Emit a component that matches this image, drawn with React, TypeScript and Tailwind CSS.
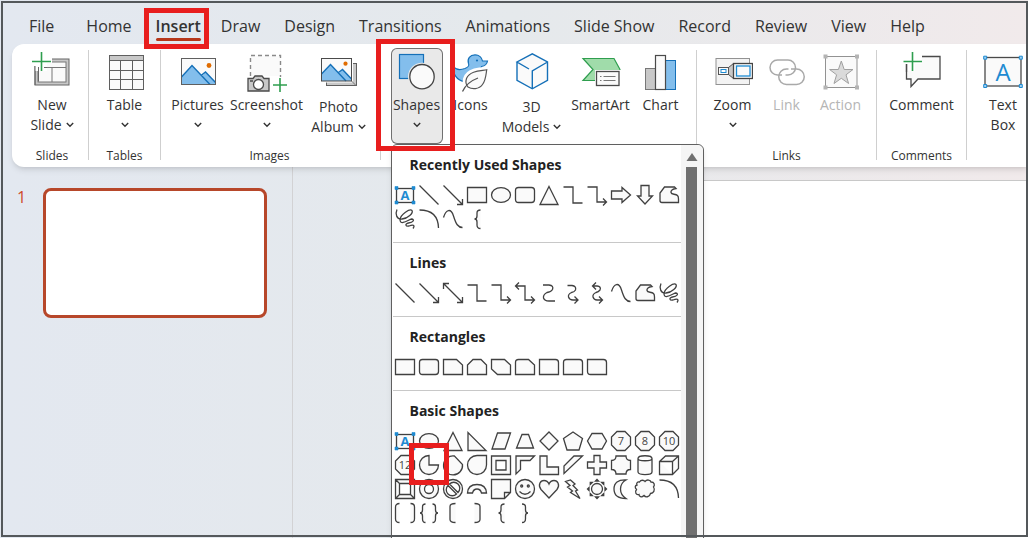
import type { ReactNode } from 'react';
import clsx from 'clsx';

const tabs = [
  'File',
  'Home',
  'Insert',
  'Draw',
  'Design',
  'Transitions',
  'Animations',
  'Slide Show',
  'Record',
  'Review',
  'View',
  'Help',
];

// ---------- Ribbon icons (40 x 40) ----------

const RibbonIcon = ({ children }: { children: ReactNode }) => (
  <svg viewBox="0 0 40 40" className="h-10 w-10 shrink-0" fill="none" aria-hidden="true">
    {children}
  </svg>
);

const NewSlideIcon = () => (
  <RibbonIcon>
    <rect x="3" y="7" width="34" height="26" fill="#c8c8c8" stroke="#666" />
    <rect x="6" y="10" width="28" height="20" fill="#fafafa" stroke="#777" />
    <path d="M6 15.5H34M20 15.5V30" stroke="#777" />
    <path d="M0 4H20V11H15V19H3V14H0Z" fill="#fff" />
    <path d="M3 14V33M6.5 15V29.5M12 15.5H15" stroke="#666" />
    <path d="M0 9.5H19M9.5 0V19" stroke="#2f9e4f" strokeWidth="1.6" />
  </RibbonIcon>
);

const TableIcon = () => (
  <RibbonIcon>
    <rect x="4.5" y="3.5" width="34" height="34" fill="#fafafa" stroke="#5f5f5f" />
    <rect x="4.5" y="3.5" width="34" height="5" fill="#c8c8c8" stroke="#5f5f5f" />
    <path d="M15.5 8.5V37.5M27.5 8.5V37.5M4.5 18.5H38.5M4.5 27.5H38.5" stroke="#5f5f5f" />
  </RibbonIcon>
);

const PicturesIcon = () => (
  <RibbonIcon>
    <rect x="3.5" y="6.5" width="34" height="26" fill="#fafafa" />
    <path d="M3.5 25L14 13.5L32 32.5H3.5Z" fill="#83beec" />
    <path d="M22.5 26L27.5 20L37.5 30V32.5H29Z" fill="#83beec" />
    <path d="M3.5 25L14 13.5L32 32.5M23 23.5L27.5 20L37.5 30.5" stroke="#1570b8" strokeWidth="1.4" />
    <circle cx="31" cy="13.5" r="2.4" fill="#e06c00" />
    <rect x="3.5" y="6.5" width="34" height="26" stroke="#5f5f5f" />
  </RibbonIcon>
);

const ScreenshotIcon = () => (
  <RibbonIcon>
    <path d="M3.5 3.5H33.5V24H3.5Z" fill="#fafafa" />
    <path d="M3.5 24V3.5H33.5V25" stroke="#8a8a8a" strokeWidth="1.4" strokeDasharray="4 3" />
    <path d="M1 26.5H6L8 24H15L17 26.5H22V39H1Z" fill="#c8c8c8" stroke="#4a4a4a" strokeWidth="1.3" />
    <circle cx="11.5" cy="32.5" r="5" fill="#fff" stroke="#4a4a4a" strokeWidth="1.3" />
    <path d="M3 29H6" stroke="#4a4a4a" strokeWidth="1.5" />
    <path d="M26 33H40M33 26V40" stroke="#2f9e4f" strokeWidth="1.6" />
  </RibbonIcon>
);

const PhotoAlbumIcon = () => (
  <RibbonIcon>
    <rect x="7.5" y="11.5" width="30" height="22" fill="#c8c8c8" stroke="#5f5f5f" />
    <rect x="1.5" y="5.5" width="32.5" height="25" fill="#fff" />
    <rect x="2.5" y="6.5" width="30" height="22.5" fill="#fafafa" />
    <path d="M2.5 22L11.5 12.5L27 29H2.5Z" fill="#83beec" />
    <path d="M19 22L23.5 17.5L32.5 27V29H25Z" fill="#83beec" />
    <path d="M2.5 22L11.5 12.5L27 29M19.5 20.5L23.5 17.5L32.5 27" stroke="#1570b8" strokeWidth="1.4" />
    <circle cx="26.5" cy="11.7" r="2.1" fill="#e06c00" />
    <rect x="2.5" y="6.5" width="30" height="22.5" stroke="#4a4a4a" />
    <path d="M32.5 29L37 33.5" stroke="#777" />
  </RibbonIcon>
);

const ShapesIcon = () => (
  <RibbonIcon>
    <rect x="2.5" y="2.5" width="24" height="24" fill="#83beec" stroke="#1570b8" strokeWidth="1.2" />
    <circle cx="25" cy="24.7" r="14" fill="#e9e9e9" />
    <circle cx="25" cy="24.7" r="12.2" fill="#fafafa" stroke="#444" strokeWidth="1.3" />
  </RibbonIcon>
);

const DuckIcon = () => (
  <RibbonIcon>
    <path
      d="M2.5 14.5C5 18 10 18 14 16.5C17.5 15 18.5 14 17.5 11.5C16 6.5 19 2.8 24 2.8C28 2.8 31 5.5 31.5 9H36.5C36 12 34 14 30.5 14.5C28.5 17 29.5 19 30 21C28 28 20 30 13 29.5C6 28.5 1.5 22 2.5 14.5Z"
      fill="#83beec"
      stroke="#1570b8"
      strokeWidth="1.2"
    />
    <circle cx="26" cy="8.5" r="1.1" fill="#1570b8" />
    <path
      d="M36.5 17C30 16.5 16 18 14 27C13.3 30 14 33 16 35.5C20 38.5 28 38 32 33C36 28 35.5 21 36.5 17Z"
      fill="#fafafa"
      stroke="#fff"
      strokeWidth="4"
    />
    <path
      d="M35.7 17.8C32 19 19 18 15.5 26.5C14.3 30 15.2 33 17 35C21 37.5 28 37.5 31.5 32.5C35 28 35 22 35.7 17.8Z"
      fill="#fafafa"
      stroke="#555"
      strokeWidth="1.2"
    />
    <path d="M11.5 39.5C13.5 35 19 29 27 26" stroke="#555" strokeWidth="1.3" />
  </RibbonIcon>
);

const CubeIcon = () => (
  <RibbonIcon>
    <path d="M20.3 1.8L35.5 10V28.3L20.3 36.8L5 28.3V10Z" fill="#fafafa" />
    <path
      d="M17 17L5 10L20.3 1.8L35.5 10V28.3L20.3 36.8L5 28.3V10M35.5 10L20.3 18.8V36.8"
      stroke="#1570b8"
      strokeWidth="1.4"
    />
  </RibbonIcon>
);

const SmartArtIcon = () => (
  <RibbonIcon>
    <path d="M2 6.5H33L39 17.5L33 28.5H2L12 17.5Z" fill="#a0dcaa" stroke="#2f9e4f" strokeWidth="1.2" />
    <path d="M14 18H40V35H14Z" fill="#fff" />
    <rect x="15.5" y="19.5" width="22.5" height="14" fill="#fafafa" stroke="#4a4a4a" strokeWidth="1.3" />
    <path d="M19 24.5H20.5M22.5 24.5H34.5M19 28.5H20.5M22.5 28.5H34.5" stroke="#777" />
  </RibbonIcon>
);

const ChartIcon = () => (
  <RibbonIcon>
    <rect x="4.5" y="16.5" width="10" height="21" fill="#c8c8c8" stroke="#777" />
    <rect x="24.5" y="8.5" width="10" height="29" fill="#83beec" stroke="#1570b8" />
    <rect x="14.5" y="3.5" width="10" height="34" fill="#fafafa" stroke="#4a4a4a" strokeWidth="1.2" />
  </RibbonIcon>
);

const ZoomIcon = () => (
  <RibbonIcon>
    <rect x="3" y="6.5" width="33.5" height="26" fill="#f3f3f3" stroke="#929292" />
    <path d="M15.5 15.5L20.5 11.5V26.5L15.5 22.5Z" fill="#c8c8c8" stroke="#555" />
    <rect x="5.5" y="15.5" width="10" height="7" fill="#fafafa" stroke="#555" />
    <rect x="8" y="17.5" width="5" height="3" fill="#fff" stroke="#1e8bd2" />
    <rect x="20.5" y="11.5" width="19" height="15" fill="#fafafa" stroke="#444" strokeWidth="1.3" />
    <rect x="23.5" y="14" width="13.5" height="10" fill="#fafafa" stroke="#1e8bd2" strokeWidth="1.3" />
  </RibbonIcon>
);

const LinkIcon = () => (
  <RibbonIcon>
    <path
      d="M15 23H10.5A7.5 7.5 0 0 1 10.5 8H21A7.5 7.5 0 0 1 21 23H18.5M24 17H29.5A7.7 7.7 0 0 1 29.5 32.5H19.5A7.7 7.7 0 0 1 19.5 17H21.5"
      stroke="#a9a9a9"
      strokeWidth="1.5"
    />
  </RibbonIcon>
);

const ActionIcon = () => (
  <RibbonIcon>
    <rect x="4.5" y="4.5" width="31.5" height="31" fill="#fafafa" stroke="#929292" />
    <path
      d="M20.3 9L23.2 17.5H32L25 22.8L27.6 31.5L20.3 26.3L13 31.5L15.6 22.8L8.6 17.5H17.4Z"
      fill="#dadada"
      stroke="#a0a0a0"
    />
    <path d="M2.5 2.5H6.5V6.5H2.5ZM34 2.5H38V6.5H34ZM2.5 33.5H6.5V37.5H2.5ZM34 33.5H38V37.5H34Z" fill="#b4b4b4" />
  </RibbonIcon>
);

const CommentIcon = () => (
  <RibbonIcon>
    <path d="M4.5 4.5H38V27H16L9 34.5V27H4.5Z" fill="#fafafa" stroke="#4a4a4a" strokeWidth="1.3" />
    <path d="M0 2H20V12H13V19H6V12H0Z" fill="#fff" />
    <path d="M4.5 12V20" stroke="#4a4a4a" strokeWidth="1.3" />
    <path d="M1.5 9.5H20M10.5 0V19" stroke="#2f9e4f" strokeWidth="1.6" />
  </RibbonIcon>
);

const TextBoxIcon = () => (
  <RibbonIcon>
    <rect x="2" y="5.5" width="36" height="28.5" fill="#fafafa" stroke="#4a4a4a" strokeWidth="1.3" />
    <text x="20" y="28.5" textAnchor="middle" fontSize="24" fill="#1e8bd2">
      A
    </text>
    <path
      d="M.7 4.2H3.7V7.2H.7ZM36.3 4.2H39.3V7.2H36.3ZM.7 32.5H3.7V35.5H.7ZM36.3 32.5H39.3V35.5H36.3Z"
      fill="#9fd0f2"
      stroke="#1e8bd2"
    />
  </RibbonIcon>
);

const Chevron = () => (
  <svg viewBox="0 0 8 6" className="h-2 w-2 shrink-0" fill="none" aria-hidden="true">
    <path d="M.8 1L4 4.2L7.2 1" stroke="#333" strokeWidth="1.4" />
  </svg>
);

// ---------- Gallery shapes (24 x 24) ----------

const octagon = 'M8 2.5H16L21.5 8V16L16 21.5H8L2.5 16V8Z';

const paths: Record<string, string> = {
  Line: 'M2.5 2.5L21.5 21.5',
  'Line arrow': 'M2.5 2.5L21 21M21.5 16V21.5H16',
  'Double arrow': 'M3 3L21 21M21.5 16V21.5H16M2.5 8V2.5H8',
  Rectangle: 'M2.5 4.5H21.5V19.5H2.5Z',
  Oval: 'M2.5 12A9.5 7.3 0 0 1 21.5 12A9.5 7.3 0 0 1 2.5 12Z',
  'Rounded rectangle': 'M5.5 4.5H18.5Q21.5 4.5 21.5 7.5V16.5Q21.5 19.5 18.5 19.5H5.5Q2.5 19.5 2.5 16.5V7.5Q2.5 4.5 5.5 4.5Z',
  Triangle: 'M12 3.5L21 21.5H3Z',
  Elbow: 'M2.5 4H12V20H21.5',
  'Elbow arrow': 'M2.5 4H12V19H21M18 15.5L21.5 19L18 22.5',
  'Elbow double arrow': 'M3 5H12V19H21M18 15.5L21.5 19L18 22.5M6 1.5L2.5 5L6 8.5',
  'Curved connector': 'M6 4H12Q17 4.5 15.5 8.5Q14 11 10 11.5Q6 13.5 6.5 17Q7.5 20 12 20H18',
  'Curved arrow': 'M6.5 4.5H11Q15.5 5 14.5 9Q13.5 11 10.5 11.5Q7 13 7.5 16Q8.5 19 12 19H17M13.5 15.5L17 19L13.5 22.5',
  'Curved double arrow': 'M8 5H12Q16.5 5.5 15 9Q13.5 11 11 11.5Q7.5 13 8 16Q9 19 12 19H17M14 15.5L17.5 19L14 22.5M11 1.5L7.5 5L11 8.5',
  'Right arrow': 'M2.5 8H13V4.5L21.5 12L13 19.5V16H2.5Z',
  'Down arrow': 'M8 2.5H16V13H19.5L12 21L4.5 13H8Z',
  Freeform: 'M7.5 4H17.5L19 5.5C15.5 6 13.5 7.5 14 9.5C14.5 12 18.5 10.5 20.5 12.5Q21.5 13.5 21.5 16V19.5H5Q3 19.5 3 17.5V10Z',
  Scribble: 'M4 2.5C2 7 3.5 12.5 9 12C15 11.5 20.5 6 19 3.5C17 1.5 7.5 7 7 13C7.5 19 16 12.5 18.5 12C22 12.5 20.5 15.5 15.5 16C11.5 17 12.5 19.5 16 19C20 17.5 22.5 18 20 21.5',
  Arc: 'M2.5 3Q21 3 21.5 21',
  Curve: 'M2.5 10.5C5 2 10 1 12.5 9C15 17 17 20.5 21.5 20.5',
  'Left brace': 'M15.5 3Q12 3 12 6V9Q12 12 9.5 12Q12 12 12 15V18Q12 21.5 15.5 21.5',
  'Snip corner': 'M2.5 4.5H15.5L21.5 10V19.5H2.5Z',
  'Snip same side': 'M8 4.5H16L21.5 10V19.5H2.5V10Z',
  'Snip diagonal': 'M2.5 4.5H15.5L21.5 10V19.5H8.5L2.5 14Z',
  'Snip and round': 'M5.5 4.5H15.5L21.5 10V19.5H2.5V7.5Q2.5 4.5 5.5 4.5Z',
  'Round corner': 'M2.5 4.5H18.5Q21.5 4.5 21.5 7.5V19.5H2.5Z',
  'Round same side': 'M5.5 4.5H18.5Q21.5 4.5 21.5 7.5V19.5H2.5V7.5Q2.5 4.5 5.5 4.5Z',
  'Round diagonal': 'M2.5 4.5H18.5Q21.5 4.5 21.5 7.5V19.5H5.5Q2.5 19.5 2.5 16.5Z',
  'Right triangle': 'M3 3.5V21.5H21Z',
  Parallelogram: 'M8.5 4H21.5L16 20H3Z',
  Trapezoid: 'M9 5.5H15.5L20.5 19H3.5Z',
  Diamond: 'M12 3L21 12L12 21L3 12Z',
  Pentagon: 'M12 3L21.5 9.5L18 21H6L2.5 9.5Z',
  Hexagon: 'M7 4.5H17L21.5 12L17 20H7L2.5 12Z',
  Pie: 'M12 2.5A9.5 9.5 0 1 0 21.5 12H12Z',
  Chord: 'M13.5 3A9.5 9.5 0 1 0 21.5 11.5Z',
  Teardrop: 'M12 2.5H21.5V12A9.5 9.5 0 1 1 12 2.5Z',
  Frame: 'M2.5 3H21.5V21.5H2.5ZM7 7.5H17V17H7Z',
  'Half frame': 'M3 3H21.5L17 7.5H7.5V16.5L3 21Z',
  'L shape': 'M3 3H10V14H21.5V21.5H3Z',
  'Diagonal stripe': 'M13 3H21.5L3 20.5V13Z',
  Cross: 'M9 2.5H15V9H21.5V15H15V21.5H9V15H2.5V9H9Z',
  Plaque: 'M7 3H17Q17 7.5 21.5 7.5V16.5Q17 16.5 17 21H7Q7 16.5 2.5 16.5V7.5Q7 7.5 7 3Z',
  Can: 'M5 5.5C5 1.8 19 1.8 19 5.5V19C19 22.5 5 22.5 5 19ZM5 5.5C5 8.5 19 8.5 19 5.5',
  Cube: 'M2.5 8.5L8.5 3H21.5V15.5L15.5 21.5H2.5ZM2.5 8.5H15.5V21.5M15.5 8.5L21.5 3',
  Bevel: 'M2.5 2.5H21.5V21.5H2.5ZM6.5 6.5H17.5V17.5H6.5ZM2.5 2.5L6.5 6.5M21.5 2.5L17.5 6.5M2.5 21.5L6.5 17.5M21.5 21.5L17.5 17.5',
  Donut: 'M2.5 12A9.5 9.5 0 0 1 21.5 12A9.5 9.5 0 0 1 2.5 12ZM7.5 12A4.5 4.5 0 0 0 16.5 12A4.5 4.5 0 0 0 7.5 12Z',
  'No symbol': 'M2.5 12A9.5 9.5 0 0 1 21.5 12A9.5 9.5 0 0 1 2.5 12ZM8.5 7A6 6 0 0 1 17 15.5ZM7 8.5A6 6 0 0 0 15.5 17Z',
  'Block arc': 'M2.5 16Q3 7.5 12 7.5T21.5 16H16.5Q15.5 12 12 12T7.5 16Z',
  'Folded corner': 'M2.5 2.5H21.5V15.5L15.5 21.5H2.5ZM15.5 21.5V15.5H21.5',
  Heart: 'M12 21L4 12.5C.5 8 3.5 3.5 7 3.5Q10.5 3.5 12 7Q13.5 3.5 17 3.5C20.5 3.5 23.5 8 20 12.5Z',
  Lightning: 'M9.5 3L14 7L12 8.5L16.5 13L14.5 14L19 21.5L9.5 15.5L11.5 14L6.5 10L9 8.5L4.5 4.5Z',
  Moon: 'M17 3Q5 2.5 5 12T17 21.5Q11.5 18 11.5 12T17 3Z',
  Cloud: 'M6.5 5C8 2.5 11 3 12 4.5C14 2 17.5 3 18 5C21.5 5 22 8 20.5 10C22.5 13 20.5 16.5 17.5 16.5C16.5 20.5 12.5 20.5 11 18.5C8.5 21 6 19.5 6 17.5C3 18.5 1.5 15 3.5 12.5C1.5 10.5 2 8.5 4 8C3 6 4.5 4.5 6.5 5Z',
  'Double bracket': 'M6.5 2.5Q2.5 2.5 2.5 6V18Q2.5 21.5 6.5 21.5M17.5 2.5Q21.5 2.5 21.5 6V18Q21.5 21.5 17.5 21.5',
  'Double brace': 'M8.5 3Q5.5 3 5.5 6V9Q5.5 12 3 12Q5.5 12 5.5 15V18Q5.5 21.5 8.5 21.5M15.5 3Q18.5 3 18.5 6V9Q18.5 12 21 12Q18.5 12 18.5 15V18Q18.5 21.5 15.5 21.5',
  'Left bracket': 'M14.5 2.5Q9 2.5 9 5.5V18.5Q9 21.5 14.5 21.5',
  'Right bracket': 'M9.5 2.5Q15 2.5 15 5.5V18.5Q15 21.5 9.5 21.5',
  'Right brace': 'M9 3Q12.5 3 12.5 6V9Q12.5 12 15 12Q12.5 12 12.5 15V18Q12.5 21.5 9 21.5',
};

// shapes that stay unfilled
const openShapes = [
  'Line', 'Line arrow', 'Double arrow', 'Elbow', 'Elbow arrow', 'Elbow double arrow',
  'Curved connector', 'Curved arrow', 'Curved double arrow', 'Scribble', 'Arc', 'Curve',
];

const numbers: Record<string, string> = { Heptagon: '7', Octagon: '8', Decagon: '10', Dodecagon: '12' };

const shapeBody = (name: string) => {
  if (name === 'Text box') {
    return (
      <>
        <rect x="3.5" y="5.5" width="17" height="14" />
        <text x="12" y="17" textAnchor="middle" fontSize="13" fontWeight="700" fill="#1e8bd2" stroke="none">
          A
        </text>
        <path
          d="M2 3.5H5V6.5H2ZM19 3.5H22V6.5H19ZM2 18H5V21H2ZM19 18H22V21H19Z"
          fill="#1e8bd2"
          stroke="#1e8bd2"
          strokeWidth=".6"
        />
      </>
    );
  }
  if (numbers[name]) {
    return (
      <>
        <path d={octagon} />
        <text x="12" y="16" textAnchor="middle" fontSize="11" fill="#444" stroke="none">
          {numbers[name]}
        </text>
      </>
    );
  }
  if (name === 'Smiley') {
    return (
      <>
        <circle cx="12" cy="12" r="9.5" />
        <circle cx="8.7" cy="9" r="1" />
        <circle cx="15.3" cy="9" r="1" />
        <path d="M6.5 14.5Q12 20 17.5 14.5" />
      </>
    );
  }
  if (name === 'Sun') {
    return (
      <>
        <circle cx="12" cy="12" r="5.5" />
        {[0, 45, 90, 135, 180, 225, 270, 315].map((angle) => (
          <path key={angle} d="M10.500 4L12 2.500L13.500 4Z" transform={`rotate(${angle} 12 12)`} />
        ))}
      </>
    );
  }
  return <path d={paths[name]} fillRule="evenodd" />;
};

const sections = [
  {
    title: 'Recently Used Shapes',
    shapes: [
      'Text box', 'Line', 'Line arrow', 'Rectangle', 'Oval', 'Rounded rectangle',
      'Triangle', 'Elbow', 'Elbow arrow', 'Right arrow', 'Down arrow', 'Freeform',
      'Scribble', 'Arc', 'Curve', 'Left brace',
    ],
  },
  {
    title: 'Lines',
    shapes: [
      'Line', 'Line arrow', 'Double arrow', 'Elbow', 'Elbow arrow', 'Elbow double arrow',
      'Curved connector', 'Curved arrow', 'Curved double arrow', 'Curve', 'Freeform', 'Scribble',
    ],
  },
  {
    title: 'Rectangles',
    shapes: [
      'Rectangle', 'Rounded rectangle', 'Snip corner', 'Snip same side', 'Snip diagonal',
      'Snip and round', 'Round corner', 'Round same side', 'Round diagonal',
    ],
  },
  {
    title: 'Basic Shapes',
    shapes: [
      'Text box', 'Oval', 'Triangle', 'Right triangle', 'Parallelogram', 'Trapezoid',
      'Diamond', 'Pentagon', 'Hexagon', 'Heptagon', 'Octagon', 'Decagon',
      'Dodecagon', 'Pie', 'Chord', 'Teardrop', 'Frame', 'Half frame',
      'L shape', 'Diagonal stripe', 'Cross', 'Plaque', 'Can', 'Cube',
      'Bevel', 'Donut', 'No symbol', 'Block arc', 'Folded corner', 'Smiley',
      'Heart', 'Lightning', 'Sun', 'Moon', 'Cloud', 'Arc',
      'Double bracket', 'Double brace', 'Left bracket', 'Right bracket', 'Left brace', 'Right brace',
    ],
  },
];

const ShapesMenu = () => (
  <div className="absolute top-full left-0 z-20 flex h-[420px] w-[313px] rounded-t-md border border-[#606060] bg-white shadow-md">
    <div className="flex-1 pl-px">
      {sections.map((section) => (
        <section key={section.title} className="border-b border-[#c8c8c8] pt-2 pb-[11px] last:border-b-0">
          <h2 className="mb-1.5 pl-[17px] text-sm leading-6 font-bold text-[#222]">{section.title}</h2>
          <div className="grid grid-cols-12">
            {section.shapes.map((name) => (
              <button key={name} type="button" aria-label={name} className="relative h-6 w-6">
                <svg
                  viewBox="0 0 24 24"
                  className="h-6 w-6"
                  fill={openShapes.includes(name) ? 'none' : '#fafafa'}
                  stroke="#404040"
                  strokeWidth="1.3"
                >
                  {shapeBody(name)}
                </svg>
                {name === 'Pie' && (
                  <span className="pointer-events-none absolute -inset-x-2 -top-2.5 -bottom-2 z-10 border-[5px] border-[#e81e1e]" />
                )}
              </button>
            ))}
          </div>
        </section>
      ))}
    </div>
    {/* Scrollbar */}
    <div className="flex w-[22px] flex-col items-center rounded-tr-md bg-[#f5f5f5] pt-2">
      <svg viewBox="0 0 12 8" className="h-2 w-3" aria-hidden="true">
        <path d="M6 0L11.5 8H.5Z" fill="#707070" />
      </svg>
      <div className="mt-1.5 w-[11px] flex-1 bg-[#707070]" />
    </div>
  </div>
);

// ---------- Ribbon ----------

type ToolProps = {
  icon: ReactNode;
  lines: string[];
  width: string;
  menu?: boolean;
  disabled?: boolean;
  active?: boolean;
  low?: boolean;
};

const Tool = ({ icon, lines, width, menu, disabled, active, low }: ToolProps) => (
  <button
    type="button"
    disabled={disabled}
    className={clsx(
      'flex h-24 shrink-0 flex-col items-center rounded-md pt-1 text-sm leading-5 whitespace-nowrap',
      width,
      disabled ? 'text-[#b5b5b5]' : 'text-[#333]',
      active && 'bg-[#e9e9e9] ring-1 ring-[#707070] ring-inset',
    )}
  >
    {icon}
    <span className={low ? 'mt-[5px]' : 'mt-[3px]'}>{lines[0]}</span>
    {(lines[1] || menu) && (
      <span className="flex h-5 items-center gap-1">
        {lines[1]}
        {menu && <Chevron />}
      </span>
    )}
  </button>
);

const Group = ({ label, className, children }: { label?: string; className?: string; children: ReactNode }) => (
  <div className={clsx('flex shrink-0 flex-col', className)}>
    <div className="flex justify-center">{children}</div>
    {label && <div className="mt-1 text-center text-xs leading-4 text-[#333]">{label}</div>}
  </div>
);

const Divider = () => <div className="mt-0.5 mb-[7px] w-px shrink-0 bg-[#cfcfcf]" />;

const Ribbon = () => (
  <div className="relative z-10 ml-3 flex h-[123px] rounded-l-xl bg-white pt-1 shadow-md">
    <Group label="Slides" className="w-[76px] pl-1">
      <Tool icon={<NewSlideIcon />} lines={['New', 'Slide']} width="w-[72px]" menu />
    </Group>
    <Divider />
    <Group label="Tables" className="w-[71px]">
      <Tool icon={<TableIcon />} lines={['Table']} width="w-14" menu />
    </Group>
    <Divider />
    <Group label="Images" className="w-[219px] pr-0.5">
      <Tool icon={<PicturesIcon />} lines={['Pictures']} width="w-[62px]" menu />
      <Tool icon={<ScreenshotIcon />} lines={['Screenshot']} width="w-[76px]" menu />
      <Tool icon={<PhotoAlbumIcon />} lines={['Photo', 'Album']} width="w-[68px]" menu low />
    </Group>
    <Divider />
    <Group className="w-[315px] pr-0.5">
      <div className="relative">
        <Tool icon={<ShapesIcon />} lines={['Shapes']} width="w-[52px]" menu active />
        <ShapesMenu />
        <span className="pointer-events-none absolute -top-[9px] -right-3 -bottom-[7px] -left-[15px] z-30 border-[5px] border-[#e81e1e]" />
      </div>
      <Tool icon={<DuckIcon />} lines={['Icons']} width="w-14" />
      <Tool icon={<CubeIcon />} lines={['3D', 'Models']} width="w-[66px]" menu low />
      <Tool icon={<SmartArtIcon />} lines={['SmartArt']} width="w-[72px]" />
      <Tool icon={<ChartIcon />} lines={['Chart']} width="w-12" />
    </Group>
    <Divider />
    <Group label="Links" className="w-[179px]">
      <Tool icon={<ZoomIcon />} lines={['Zoom']} width="w-[54px]" menu />
      <Tool icon={<LinkIcon />} lines={['Link']} width="w-[54px]" disabled />
      <Tool icon={<ActionIcon />} lines={['Action']} width="w-[54px]" disabled />
    </Group>
    <Divider />
    <Group label="Comments" className="w-[89px]">
      <Tool icon={<CommentIcon />} lines={['Comment']} width="w-20" />
    </Group>
    <Divider />
    <Group className="w-[72px]">
      <Tool icon={<TextBoxIcon />} lines={['Text', 'Box']} width="w-14" />
    </Group>
  </div>
);

const App = () => {
  return (
    <div className="relative flex h-screen flex-col overflow-hidden bg-linear-to-r from-[#e3e8f0] via-[#e5e9ec] to-[#f1eaeb] font-['Open_Sans','Noto_Sans',sans-serif]">
      {/* Tabs */}
      <nav className="flex h-11 shrink-0 gap-6 pt-3 pl-[29px]">
        {tabs.map((tab) => (
          <button
            key={tab}
            type="button"
            className={clsx(
              'relative h-7 text-base leading-7 whitespace-nowrap text-[#333]',
              tab === 'File' && 'mr-2',
              tab === 'Insert' && 'z-20 -mr-1 font-semibold',
            )}
          >
            {tab}
            {tab === 'Insert' && (
              <>
                <span className="absolute inset-x-0 -bottom-px h-[3px] rounded-full bg-[#b7371a]" />
                <span className="pointer-events-none absolute -top-1 -right-2 -bottom-[9px] -left-3 border-[5px] border-[#e81e1e]" />
              </>
            )}
          </button>
        ))}
      </nav>

      <Ribbon />

      {/* Workspace */}
      <main className="flex min-h-0 flex-1">
        <aside className="flex w-[293px] shrink-0 items-start border-r border-[#d2d2d4] pt-[21px] pl-[17px]">
          <span className="w-[26px] text-base leading-[18px] text-[#cf4a2c]">1</span>
          <button
            type="button"
            aria-label="Slide 1"
            className="h-[130px] w-56 rounded-lg border-3 border-[#b7472a] bg-white"
          />
        </aside>
        <div className="mt-[13px] ml-32 flex-1 border-t border-[#c8c8c8] bg-white" />
      </main>

      {/* Window frame */}
      <div className="pointer-events-none absolute top-px right-0 bottom-px left-px z-40 border-2 border-[#54585b]" />
    </div>
  );
};

export default App;
